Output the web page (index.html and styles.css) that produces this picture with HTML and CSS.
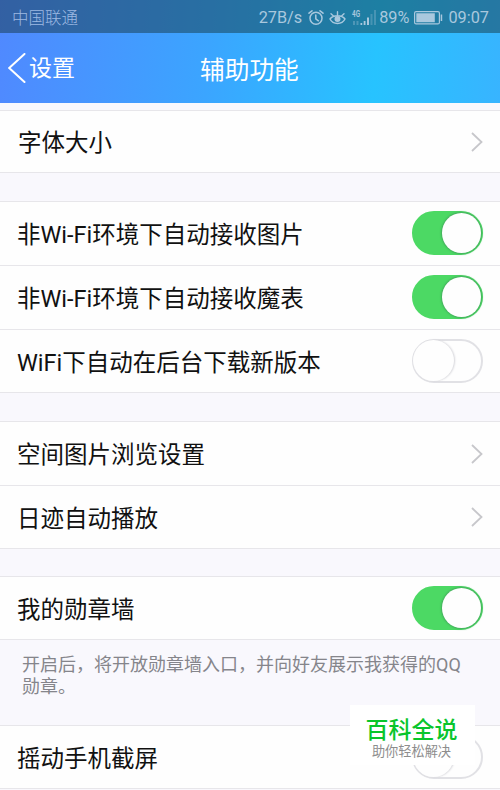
FILE: index.html
```html
<!DOCTYPE html>
<html lang="zh-CN">
<head>
<meta charset="utf-8">
<title>辅助功能</title>
<link rel="stylesheet" href="styles.css">
</head>
<body>
<div class="screen">
  <header class="top">
    <div class="status">
      <span class="carrier">中国联通</span>
      <span class="speed">27B/s</span>
      <svg class="alarm" width="16" height="18" viewBox="0 0 16 18" fill="none" stroke="currentColor" stroke-width="1.5" stroke-linecap="round"><circle cx="8" cy="9.3" r="6"/><path d="M7.8 6v3.8l2.6 2M1 4.2L4 1.8M15 4.2L12 1.8"/></svg>
      <svg class="eye" width="17" height="16" viewBox="0 0 17 16" fill="none" stroke="currentColor" stroke-width="1.4" stroke-linecap="round"><path d="M1 9C4 4.7 13 4.7 16 9C13 15 4 15 1 9zM8.5 5V1.7M4.2 5.8L2 3.8M12.8 5.8L15 3.8"/><circle cx="8.5" cy="9" r="2.3" fill="currentColor"/></svg>
      <svg class="signal" width="26" height="18" viewBox="0 0 26 18"><text class="gen" x="1" y="8" textLength="8" lengthAdjust="spacingAndGlyphs">4G</text><g fill="currentColor"><path opacity=".35" d="M2 12h2v4H2zM5.5 12h2v4h-2z"/><path d="M9.5 14h1.7v2H9.5zM12.7 12h1.8v4h-1.8zM16 8.500h2V16h-2z"/><path opacity=".3" d="M19.5 5h2v11h-2zM23 1h2v15h-2z"/></g></svg>
      <span class="percent">89%</span>
      <svg class="battery" width="29" height="14" viewBox="0 0 29 14"><rect x=".6" y=".6" width="24.8" height="12.3" rx="1.5" fill="none" stroke="currentColor" stroke-width="1.2"/><path d="M2.3 2.3h18.5v9H2.3zM26.7 3.5h1.5v6.500h-1.5z" fill="currentColor"/></svg>
      <span class="clock">09:07</span>
    </div>
    <nav class="nav">
      <a class="back"><svg width="18" height="30" viewBox="0 0 18 30" fill="none" stroke="currentColor" stroke-width="2" stroke-linecap="round"><path d="M16.5 1L1.2 15l15.3 14"/></svg><span>设置</span></a>
      <h1 class="title">辅助功能</h1>
    </nav>
  </header>
  <main>
    <section class="group first">
      <div class="row"><span>字体大小</span><svg class="chevron" viewBox="0 0 12 20"><path d="M1 1l9.5 9L1 19"/></svg></div>
    </section>
    <section class="group">
      <div class="row"><span>非Wi-Fi环境下自动接收图片</span><i class="switch on"></i></div>
      <div class="row"><span>非Wi-Fi环境下自动接收魔表</span><i class="switch on"></i></div>
      <div class="row last"><span>WiFi下自动在后台下载新版本</span><i class="switch"></i></div>
    </section>
    <section class="group qzone">
      <div class="row"><span>空间图片浏览设置</span><svg class="chevron" viewBox="0 0 12 20"><path d="M1 1l9.5 9L1 19"/></svg></div>
      <div class="row last"><span>日迹自动播放</span><svg class="chevron" viewBox="0 0 12 20"><path d="M1 1l9.5 9L1 19"/></svg></div>
    </section>
    <section class="group medal">
      <div class="row last"><span>我的勋章墙</span><i class="switch on"></i></div>
    </section>
    <p class="note">开启后，将开放勋章墙入口，并向好友展示我获得的QQ勋章。</p>
    <section class="group shake">
      <div class="row last"><span>摇动手机截屏</span><i class="switch"></i></div>
    </section>
  </main>
  <aside class="badge"><strong>百科全说</strong><span>助你轻松解决</span></aside>
</div>
</body>
</html>
```
FILE: styles.css
```css
* { box-sizing: border-box; }
body { margin: 0; font-family: Roboto, "Noto Sans CJK SC", sans-serif; background: #f9f8fd; }
.screen { position: relative; width: 500px; height: 790px; overflow: hidden; background: #f9f8fd; }
.top { height: 103px; background: linear-gradient(95deg, #5089ff 0%, #3ba5ff 42%, #27c3ff 75%, #38b4ff 100%); color: #fff; }
.status { display: flex; align-items: center; height: 33px; padding: 2px 11px 0 12px; background: rgba(20, 50, 60, .47); color: #a9c8de; font-size: 16.3px; line-height: 30px; white-space: nowrap; }
.carrier { padding-top: 2px; font-size: 16.5px; font-weight: 300; color: #9db9e2; }
.speed { margin-left: auto; }
.alarm { margin-left: 6px; }
.eye { margin-left: 5px; }
.signal { margin-left: 5px; }
.gen { font: 700 9px Roboto, sans-serif; fill: currentColor; }
.percent { margin-left: 2px; }
.battery { margin-left: 5px; }
.clock { margin-left: 5px; }
.nav { display: grid; grid-template-columns: 200px 100px 1fr; align-items: center; height: 70px; }
.back { display: flex; align-items: center; gap: 3px; padding-left: 8px; font-size: 23px; line-height: 34px; }
.title { margin: 0; padding-top: 5px; font-size: 24.7px; font-weight: 400; line-height: 34px; white-space: nowrap; }
.back span { padding-top: 2px; }
.group { margin-bottom: 28px; border-top: 1px solid #e7e6ea; border-bottom: 1px solid #e7e6ea; background: #fefefe; }
.first { margin-top: 7px; }
.row { display: flex; align-items: center; justify-content: space-between; height: 64px; padding: 0 17px; border-bottom: 1px solid #e7e6ea; color: #111; font-size: 23.5px; line-height: 34px; white-space: nowrap; }
.row span { padding-top: 2px; }
.last { height: 62px; border-bottom: 0; }
.last span { padding-top: 4px; }
.first .row { height: 61px; padding-left: 18px; border-bottom: 0; }
.first .row span { padding-top: 3px; }
.chevron { width: 12px; height: 20px; fill: none; stroke: #c7c7cb; stroke-width: 1.8; }
.switch { position: relative; width: 71px; height: 44px; border: 2px solid #e1e1e5; border-radius: 22px; background: #fefefe; }
.row:not(.last) .switch { margin-bottom: 2px; }
.switch::after { content: ""; position: absolute; top: -1px; left: -1px; width: 41px; height: 41px; border-radius: 50%; background: #fefefe; box-shadow: 1px 0 2px #d5d5da; }
.switch.on { border-color: #4cd964; background: #4cd964; }
.switch.on::after { top: 0; left: 28px; width: 39px; height: 40px; box-shadow: 0 0 2px 1px #43ab5c; }
.qzone { margin-bottom: 27px; }
.medal { margin-bottom: 0; }
.note { height: 85px; margin: 0; padding: 14px 22px 0; color: #85858b; font-size: 18px; line-height: 22px; }
.shake { margin-bottom: 0; }
.badge { position: absolute; top: 705px; left: 350px; display: flex; flex-direction: column; align-items: center; width: 125px; height: 60px; padding: 10px 2px 0 0; background: #fff; }
.badge strong { color: #09c52c; font-size: 23px; font-weight: 500; line-height: 31px; }
.badge span { color: #8d8d8d; font-size: 13.2px; line-height: 12px; }
```
